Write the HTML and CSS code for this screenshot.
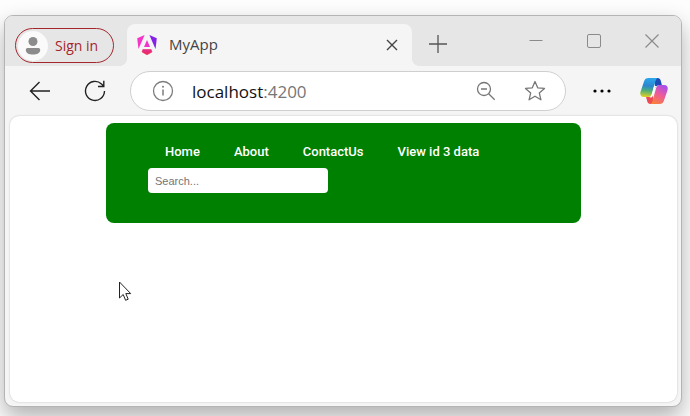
FILE: index.html
```html
<!DOCTYPE html>
<html lang="en">
<head>
<meta charset="utf-8">
<title>MyApp</title>
<link rel="stylesheet" href="styles.css">
</head>
<body>
<div class="window">
  <header class="tabstrip">
    <button class="signin" type="button">
      <span class="avatar">
        <svg width="16" height="18" viewBox="0 0 16 18" fill="#8c8c8c"><circle cx="8" cy="4.500" r="4.500"/><path d="M2.500 11h11A1.700 1.700 0 0 1 15.200 12.700C15.200 16 12 17.500 8 17.500S.8 16 .8 12.700A1.700 1.700 0 0 1 2.500 11z"/></svg>
      </span>
      Sign in
    </button>
    <div class="tab">
      <svg width="20" height="22" viewBox="0 0 20 22">
        <defs><linearGradient id="ng" x1="0" y1="0.300" x2="1" y2="0"><stop offset="0" stop-color="#f637c8"/><stop offset="1" stop-color="#e42bd5"/></linearGradient>
        <linearGradient id="nb" x1="0" y1="0" x2="0" y2="1"><stop offset="0" stop-color="#e52c9b"/><stop offset="1" stop-color="#f02a4a"/></linearGradient></defs>
        <path d="M7.600 1 1.500 15 .2 4.200z" fill="#f535c6"/>
        <path d="M12.400 1 19.800 4.200 18.500 15z" fill="#8522e8"/>
        <path d="M10 6 13 13H7z" fill="url(#ng)"/>
        <path d="M5.900 15.500h8.200l.9 2.400L10 20.800 5 17.900z" fill="url(#nb)" stroke="#ea2b5e" stroke-width=".6"/>
      </svg>
      <span class="tab-title">MyApp</span>
      <button class="icon-btn" type="button" aria-label="Close tab">
        <svg width="12" height="12" viewBox="0 0 12 12" fill="none" stroke="#444" stroke-width="1.400"><path d="M1 1l10 10M11 1 1 11"/></svg>
      </button>
    </div>
    <button class="icon-btn new-tab" type="button" aria-label="New tab">
      <svg width="18" height="18" viewBox="0 0 18 18" fill="none" stroke="#555" stroke-width="1.300"><path d="M9 0v18M0 9h18"/></svg>
    </button>
    <div class="controls">
      <button class="icon-btn" type="button" aria-label="Minimize"><svg width="14" height="14" viewBox="0 0 14 14" fill="none" stroke="#8b8b8b"><path d="M.5 6.500h13"/></svg></button>
      <button class="icon-btn" type="button" aria-label="Maximize"><svg width="14" height="14" viewBox="0 0 14 14" fill="none" stroke="#8b8b8b"><rect x=".5" y=".5" width="13" height="13" rx="1.500"/></svg></button>
      <button class="icon-btn" type="button" aria-label="Close"><svg width="14" height="14" viewBox="0 0 14 14" fill="none" stroke="#8b8b8b" stroke-width="1.200"><path d="M.5.5l13 13M13.500.5l-13 13"/></svg></button>
    </div>
  </header>
  <div class="toolbar">
    <div class="travel">
      <button class="icon-btn" type="button" aria-label="Back"><svg width="22" height="20" viewBox="0 0 22 20" fill="none" stroke="#222" stroke-width="1.400"><path d="M21 10H1.500M10.500 1 1.500 10l9 9"/></svg></button>
      <button class="icon-btn" type="button" aria-label="Refresh"><svg width="22" height="22" viewBox="0 0 22 22" fill="none" stroke="#222" stroke-width="1.400"><path d="M20.500 11a9.500 9.500 0 1 1-3-7l2 2M19.800.8V6.500H14"/></svg></button>
    </div>
    <div class="address">
      <svg width="22" height="22" viewBox="0 0 22 22" fill="none" stroke="#7d7d7d" stroke-width="1.300"><circle cx="11" cy="11" r="9.500"/><path d="M11 9.500v6" stroke-width="1.500"/><circle cx="11" cy="6.700" r="1" fill="#7d7d7d" stroke="none"/></svg>
      <span class="url">localhost<span class="port">:4200</span></span>
      <button class="icon-btn" type="button" aria-label="Zoom out"><svg width="20" height="20" viewBox="0 0 20 20" fill="none" stroke="#777" stroke-width="1.300"><circle cx="8" cy="8" r="6.500"/><path d="M5 8h6M12.700 12.700l6 6"/></svg></button>
      <button class="icon-btn" type="button" aria-label="Add to favorites"><svg width="22" height="22" viewBox="0 0 22 22" fill="none" stroke="#777" stroke-width="1.300" stroke-linejoin="round"><path d="M11 1.500l2.700 6.300 6.800.6-5.200 4.500 1.600 6.900L11 16.200l-5.900 3.600 1.600-6.900L1.500 8.400l6.800-.6z"/></svg></button>
    </div>
    <button class="icon-btn" type="button" aria-label="Settings and more"><svg width="18" height="4" viewBox="0 0 18 4"><circle cx="2" cy="2" r="1.600"/><circle cx="9" cy="2" r="1.600"/><circle cx="16" cy="2" r="1.600"/></svg></button>
    <button class="icon-btn copilot" type="button" aria-label="Copilot">
      <svg width="28" height="26" viewBox="0 0 28 26">
        <defs>
          <linearGradient id="ca" x1=".3" y1="0" x2=".2" y2="1"><stop offset="0" stop-color="#2aa5ea"/><stop offset=".4" stop-color="#2b86cf"/><stop offset=".65" stop-color="#4cae78"/><stop offset="1" stop-color="#e8d21f"/></linearGradient>
          <linearGradient id="cb" x1=".8" y1="0" x2=".3" y2="1"><stop offset="0" stop-color="#a44df0"/><stop offset=".5" stop-color="#ee5a9b"/><stop offset="1" stop-color="#f7803c"/></linearGradient>
        </defs>
        <path d="M14 0h3.500c2 0 2.700 1 3.200 2.500L22 7.500h-3c-2 0-3 .6-3.600 2.500z" fill="#1b4cb8"/>
        <path d="M8.500 0H18c-1.600.5-2.200 2-2.700 3.800L12 15.500C11.300 18 10 19 8 19H4C.5 19-.3 16.500.6 13.500L4 3.500C4.800 1 6 0 8.500 0z" fill="url(#ca)"/>
        <path d="M14 26h-3.500c-2 0-2.700-1-3.200-2.500L6 19h3c2 0 3-.6 3.600-2.500z" fill="#ee4a55"/>
        <path d="M19.500 26H10c1.600-.5 2.200-2 2.700-3.800L16 10.500c.7-2.500 2-3.500 4-3.500h4c3.500 0 4.300 2.500 3.400 5.500L24 22.500c-.8 2.500-2 3.500-4.500 3.500z" fill="url(#cb)"/>
        <path d="M14 8h2.500c-1 .8-1.500 2-2 3.600l-1.300 4.600c-.5 1.800-1 2.800-1.800 3.300H9.500c1.500-.6 2-2 2.500-3.800z" fill="#fff"/>
      </svg>
    </button>
  </div>
  <main class="viewport">
    <div class="banner">
      <nav class="menu">
        <a href="#home">Home</a>
        <a href="#about">About</a>
        <a href="#contact">ContactUs</a>
        <a href="#view">View id 3 data</a>
      </nav>
      <input class="search" type="search" placeholder="Search..." aria-label="Search">
    </div>
  </main>
</div>
<svg class="cursor" width="14" height="21" viewBox="0 0 14 21" fill="#fff" stroke="#222" stroke-linejoin="round"><path d="M1.500 1v16l3.700-3.500 2.400 5.800 2.600-1.100-2.400-5.600h4.900z"/></svg>
</body>
</html>
```
FILE: styles.css
```css
* {
  box-sizing: border-box;
}

body {
  margin: 0;
  min-height: 100vh;
  padding: 15px 8px 9px 4px;
  display: flex;
  background: #fdfdfd;
  font-family: "Open Sans", "Noto Sans", sans-serif;
}

svg {
  display: block;
  flex: none;
}

button {
  font: inherit;
  border: 0;
  padding: 0;
  background: none;
}

.window {
  flex: 1;
  display: flex;
  flex-direction: column;
  background: #f5f5f5;
  border: 1px solid #b4b4b4;
  border-radius: 9px;
  overflow: hidden;
  box-shadow: 0 10px 22px rgba(0, 0, 0, 0.3);
}

.tabstrip {
  display: flex;
  align-items: flex-end;
  height: 50px;
  padding-left: 10px;
  background: #e6e6e6;
}

.signin {
  display: flex;
  align-items: center;
  gap: 7px;
  height: 35px;
  width: 99px;
  padding-left: 2px;
  margin-bottom: 3px;
  border: 1px solid #a4262c;
  border-radius: 18px;
  color: #a4262c;
  font-size: 14px;
  white-space: nowrap;
}

.avatar {
  display: grid;
  place-items: center;
  width: 30px;
  height: 30px;
  border-radius: 50%;
  background: #fafafa;
}

.tab {
  position: relative;
  display: flex;
  align-items: center;
  gap: 12px;
  flex: 0 1 285px;
  height: 42px;
  margin-left: 13px;
  padding: 0 14px 0 10px;
  background: #f5f5f5;
  border-radius: 8px 8px 0 0;
}

.tab::before,
.tab::after {
  content: "";
  position: absolute;
  bottom: 0;
  width: 8px;
  height: 8px;
}

.tab::before {
  right: 100%;
  background: radial-gradient(circle at 0 0, #e6e6e6 8px, #f5f5f5 8px);
}

.tab::after {
  left: 100%;
  background: radial-gradient(circle at 100% 0, #e6e6e6 8px, #f5f5f5 8px);
}

.tab-title {
  flex: 1;
  color: #444;
  font-size: 15px;
  padding-bottom: 2px;
}

.new-tab {
  margin: 0 0 13px 17px;
}

.controls {
  display: flex;
  gap: 44px;
  margin: 0 22px 18px auto;
}

.toolbar {
  display: flex;
  align-items: center;
  height: 50px;
  padding: 0 13px 0 24px;
}

.travel {
  display: flex;
  align-items: center;
  gap: 33px;
}

.address {
  flex: 1;
  display: flex;
  align-items: center;
  gap: 28px;
  height: 40px;
  margin: 0 27px 0 24px;
  padding: 0 19px 0 21px;
  background: #fff;
  border: 1px solid #cfcfcf;
  border-radius: 20px;
}

.url {
  flex: 1;
  margin-left: -10px;
  color: #111;
  font-size: 17px;
}

.port {
  color: #767676;
}

.copilot {
  margin-left: 29px;
}

.viewport {
  flex: 1;
  margin: 0 4px 4px 5px;
  padding: 7px 96px;
  background: #fff;
  border-radius: 9px;
  box-shadow: 0 0 2px rgba(0, 0, 0, 0.24);
}

.banner {
  padding: 20px 42px 30px;
  background: #008000;
  border-radius: 8px;
}

.menu {
  display: flex;
}

.menu a {
  padding: 0 17px;
  color: #fff;
  font: 500 13px/18px Roboto, "Liberation Sans", sans-serif;
  text-decoration: none;
  white-space: nowrap;
}

.search {
  display: block;
  width: 180px;
  height: 25px;
  margin-top: 7px;
  padding: 0 7px;
  border: 0;
  border-radius: 4px;
  background: #fff;
  font: 11px "Liberation Sans", Arial, sans-serif;
}

.search::placeholder {
  color: #757575;
}

.cursor {
  position: absolute;
  left: 118px;
  top: 281px;
}
```
